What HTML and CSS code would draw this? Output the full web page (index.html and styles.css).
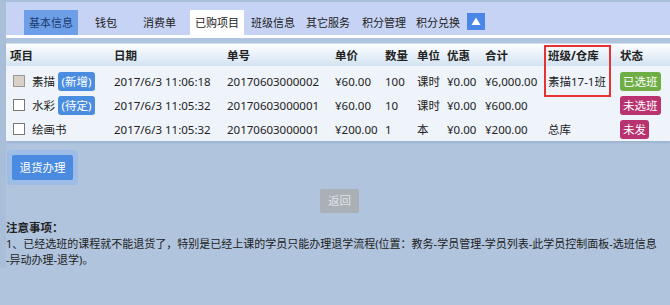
FILE: index.html
```html
<!DOCTYPE html>
<html>
<head>
<meta charset="utf-8">
<link rel="stylesheet" href="styles.css">
</head>
<body>
<div class="page">
  <div class="tabs">
    <span class="tab tab-sel">基本信息</span>
    <span class="tab">钱包</span>
    <span class="tab">消费单</span>
    <span class="tab tab-active">已购项目</span>
    <span class="tab">班级信息</span>
    <span class="tab">其它服务</span>
    <span class="tab">积分管理</span>
    <span class="tab">积分兑换</span>
    <span class="tab-up"><svg width="18" height="17" viewBox="0 0 18 17"><rect width="18" height="17" fill="#4a86e8"/><path d="M9 4.5 L13.5 12 L4.5 12 Z" fill="#fff"/></svg></span>
  </div>
  <div class="tab-line"></div>

  <div class="table-wrap">
    <table class="grid">
      <colgroup>
        <col style="width:104px"><col style="width:113px"><col style="width:108px"><col style="width:50px"><col style="width:32px"><col style="width:30px"><col style="width:38px"><col style="width:63px"><col style="width:72px"><col>
      </colgroup>
      <thead>
        <tr><th>项目</th><th>日期</th><th>单号</th><th>单价</th><th>数量</th><th>单位</th><th>优惠</th><th>合计</th><th>班级/仓库</th><th>状态</th></tr>
      </thead>
      <tbody>
        <tr>
          <td><span class="item"><span class="cb cb-checked"></span>素描<span class="badge">(新增)</span></span></td>
          <td>2017/6/3 11:06:18</td><td>20170603000002</td><td>¥60.00</td><td>100</td><td>课时</td><td>¥0.00</td><td>¥6,000.00</td><td>素描17-1班</td><td><span class="status st-green">已选班</span></td>
        </tr>
        <tr>
          <td><span class="item"><span class="cb"></span>水彩<span class="badge">(待定)</span></span></td>
          <td>2017/6/3 11:05:32</td><td>20170603000001</td><td>¥60.00</td><td>10</td><td>课时</td><td>¥0.00</td><td>¥600.00</td><td></td><td><span class="status st-red">未选班</span></td>
        </tr>
        <tr>
          <td><span class="item"><span class="cb"></span>绘画书</span></td>
          <td>2017/6/3 11:05:32</td><td>20170603000001</td><td>¥200.00</td><td>1</td><td>本</td><td>¥0.00</td><td>¥200.00</td><td>总库</td><td><span class="status st-red">未发</span></td>
        </tr>
      </tbody>
    </table>
    <div class="highlight"></div>
  </div>

  <div class="actions">
    <span class="btn-halo"><span class="btn-primary">退货办理</span></span>
  </div>
  <div class="back-row"><span class="btn-back">返回</span></div>

  <div class="notes">
    <div class="notes-title">注意事项：</div>
    <div class="notes-text">1、已经选班的课程就不能退货了，特别是已经上课的学员只能办理退学流程(位置：教务-学员管理-学员列表-此学员控制面板-选班信息<br>-异动办理-退学)。</div>
  </div>
</div>
</body>
</html>
```

FILE: styles.css
```css
html, body {
  margin: 0;
  padding: 0;
}
body {
  background: #b0c4de;
  font-family: "Noto Sans", "Noto Sans CJK SC", sans-serif;
  font-size: 11.5px;
  color: #222;
  width: 670px;
  height: 305px;
  overflow: hidden;
}
.page {
  border-left: 6px solid #a9bfd9;
  border-top: 2px solid #a9bfd9;
}
.tabs {
  background: #c7d3f5;
  height: 33px;
  display: flex;
  align-items: flex-end;
  padding-left: 18px;
  font-size: 11px;
}
.tab {
  height: 25px;
  line-height: 25px;
  padding: 0 5px;
  margin-right: 1px;
  color: #222;
}
.tab:nth-child(1) { margin-right: 12px; }
.tab:nth-child(2) { margin-right: 16px; }
.tab:nth-child(3) { margin-right: 9px; }
.tab:nth-child(4) { margin-right: 2px; }
.tab:nth-child(6) { margin-right: 2px; }
.tab:nth-child(7) { margin-right: 0; }
.tab:nth-child(8) { margin-right: 2px; }
.tab-sel {
  background: #6c9fe8;
  color: #1d3c6e;
}
.tab-active {
  background: #fff;
}
.tab-up {
  height: 17px;
  margin: 0 0 5px 0;
  display: flex;
}
.tab-line {
  height: 3px;
  background: #fbfdff;
}
.table-wrap {
  position: relative;
  margin-top: 5px;
  background: #eef4fa;
  border-top: 1px solid #d2e0ee;
  box-shadow: 0 2px 2px #9fb4cf;
}
.grid {
  border-collapse: collapse;
  table-layout: fixed;
  width: 664px;
}
.grid th {
  text-align: left;
  font-weight: bold;
  height: 22px;
  padding: 0 0 0 4px;
  background: linear-gradient(#fdfeff, #d3e3f2);
  color: #222;
  white-space: nowrap;
}
.grid td {
  height: 24px;
  padding: 0 0 0 4px;
  white-space: nowrap;
}
.grid tbody tr:first-child td {
  padding-top: 3px;
}
.item {
  display: flex;
  align-items: center;
}
.cb {
  width: 10px;
  height: 10px;
  border: 1px solid #777;
  background: #fff;
  margin: 0 7px 0 3px;
  flex: none;
}
.cb-checked {
  background: #d9d1c6;
  border-color: #999;
}
.badge {
  background: #4a8de0;
  color: #fff;
  border-radius: 3px;
  padding: 0 3.5px;
  height: 19px;
  line-height: 19px;
  margin-left: 3px;
}
.status {
  display: inline-block;
  color: #fff;
  border-radius: 3px;
  padding: 0 3px;
  height: 19px;
  line-height: 19px;
}
.st-green { background: #6fad45; }
.st-red { background: #b83370; }
.highlight {
  position: absolute;
  left: 538px;
  top: 1px;
  width: 63px;
  height: 48px;
  border: 2px solid #e53333;
}
.actions {
  margin-top: 9px;
  display: flex;
}
.btn-halo {
  padding: 5px;
  background: #9ebde6;
  border-radius: 4px;
  margin-left: 1px;
}
.btn-primary {
  display: block;
  background: #4a8ae0;
  color: #fff;
  height: 25px;
  line-height: 25px;
  padding: 0 7.5px;
  border-radius: 2px;
}
.back-row {
  display: flex;
  justify-content: center;
  margin-top: 4px;
  padding-left: 3px;
}
.btn-back {
  background: #aab0b6;
  color: #dfe3e7;
  height: 24px;
  line-height: 24px;
  padding: 0 8px;
  border-radius: 2px;
}
.notes {
  margin-top: 7px;
  padding-right: 2px;
  line-height: 16px;
}
.notes-title {
  font-weight: bold;
}
.notes-text {
  font-size: 11px;
  white-space: nowrap;
}
```
